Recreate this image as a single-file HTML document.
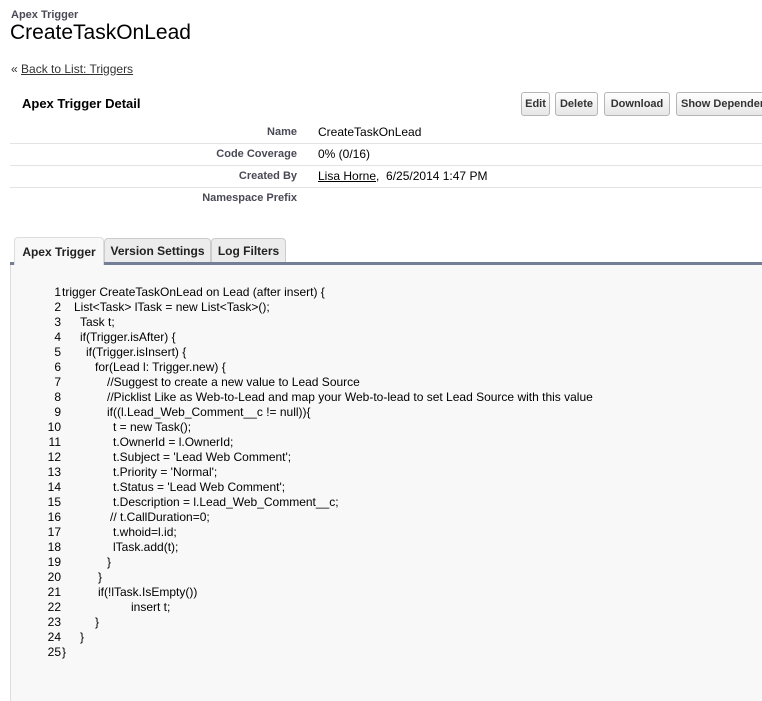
<!DOCTYPE html>
<html><head><style>
body{margin:0;width:762px;height:701px;overflow:hidden;background:#fff;font-family:"Liberation Sans",Arial,sans-serif;color:#000;position:relative}
.a{position:absolute;white-space:nowrap}
.lbl{position:absolute;right:465px;font-size:11px;font-weight:bold;color:#4a4a56}
.val{position:absolute;left:318px;font-size:12px;color:#000;white-space:nowrap}
.hr{position:absolute;left:10px;width:752px;height:1px;background:#e3e3e3}
.btn{position:absolute;top:92px;height:22px;border:1px solid #b5b5b5;border-radius:3px;background:linear-gradient(#fff,#e6e6e6);font-size:11px;font-weight:bold;color:#333;line-height:22px;text-align:center;box-sizing:content-box;white-space:nowrap;overflow:hidden}
.tab{position:absolute;top:238px;height:24px;border:1px solid #ccc;border-bottom:none;border-radius:4px 4px 0 0;background:#ececec;font-size:12px;font-weight:bold;color:#222;line-height:24px;text-align:center;box-sizing:border-box}
.ln{position:absolute;width:61px;text-align:right;font-size:12px;color:#000}
.cd{position:absolute;font-size:12px;color:#000;white-space:pre}
</style></head><body>
<div class="a" style="left:11px;top:9px;font-size:11px;font-weight:bold;color:#4a4a56">Apex Trigger</div>
<div class="a" style="left:10px;top:21px;font-size:21px">CreateTaskOnLead</div>
<div class="a" style="left:11px;top:62px;font-size:12px;color:#333">« <span style="text-decoration:underline">Back to List: Triggers</span></div>
<div class="a" style="left:22px;top:96px;font-size:13px;font-weight:bold">Apex Trigger Detail</div>
<div class="btn" style="left:521px;width:27px">Edit</div>
<div class="btn" style="left:555px;width:41px">Delete</div>
<div class="btn" style="left:604px;width:64px">Download</div>
<div class="btn" style="left:676px;width:100px;text-align:left;padding-left:4px">Show Dependencies</div>
<div class="lbl" style="top:126px">Name</div><div class="val" style="top:125px">CreateTaskOnLead</div>
<div class="hr" style="top:143px"></div>
<div class="lbl" style="top:148px">Code Coverage</div><div class="val" style="top:147px">0% (0/16)</div>
<div class="hr" style="top:165px"></div>
<div class="lbl" style="top:170px">Created By</div><div class="val" style="top:169px"><span style="text-decoration:underline">Lisa Horne</span>,&nbsp; 6/25/2014 1:47 PM</div>
<div class="hr" style="top:187px"></div>
<div class="lbl" style="top:192px">Namespace Prefix</div>
<div style="position:absolute;left:10px;top:265px;width:752px;height:436px;background:#f8f8f8;border-left:1px solid #ddd"></div>
<div style="position:absolute;left:10px;top:262px;width:752px;height:3px;background:#747e96"></div>
<div class="tab" style="left:14px;width:90px;background:#f8f8f8;height:28px;top:237px;line-height:28px;border-color:#ddd">Apex Trigger</div>
<div class="tab" style="left:104px;width:107px">Version Settings</div>
<div class="tab" style="left:211px;width:75px">Log Filters</div>
<div id="code"></div>
<script>
var L=[[62,"trigger CreateTaskOnLead on Lead (after insert) {"],[74,"List<Task> lTask = new List<Task>();"],[80,"Task t;"],[80,"if(Trigger.isAfter) {"],[86,"if(Trigger.isInsert) {"],[95,"for(Lead l: Trigger.new) {"],[107,"//Suggest to create a new value to Lead Source"],[107,"//Picklist Like as Web-to-Lead and map your Web-to-lead to set Lead Source with this value"],[107,"if((l.Lead_Web_Comment__c != null)){"],[113,"t = new Task();"],[113,"t.OwnerId = l.OwnerId;"],[113,"t.Subject = 'Lead Web Comment';"],[113,"t.Priority = 'Normal';"],[113,"t.Status = 'Lead Web Comment';"],[113,"t.Description = l.Lead_Web_Comment__c;"],[110,"// t.CallDuration=0;"],[113,"t.whoid=l.id;"],[113,"lTask.add(t);"],[107,"}"],[98,"}"],[98,"if(!lTask.IsEmpty())"],[131,"insert t;"],[95,"}"],[80,"}"],[62,"}"]];
var h="";L.forEach(function(l,i){var y=285+i*15;h+='<div class="ln" style="top:'+y+'px;left:0">'+(i+1)+'</div><div class="cd" style="top:'+y+'px;left:'+l[0]+'px">'+l[1].replace(/</g,"&lt;").replace(/>/g,"&gt;")+'</div>';});
document.getElementById("code").innerHTML=h;
</script>
</body></html>
